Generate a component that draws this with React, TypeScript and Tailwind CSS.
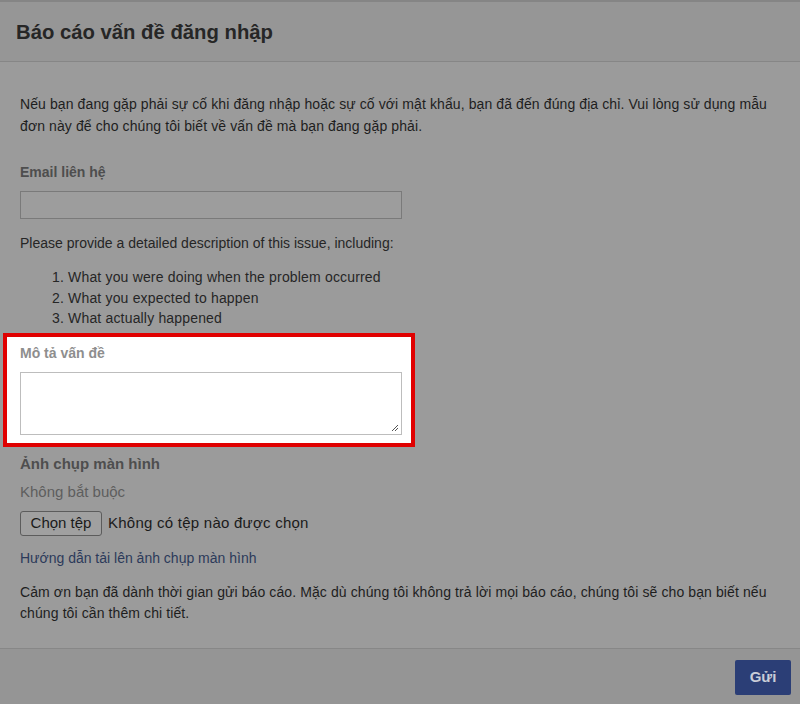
import React from "react";

export default function App() {
  return (
    <div
      className="w-[800px] h-[704px] bg-[#9b9b9b] flex flex-col overflow-hidden text-[#1e1e1e]"
      style={{ fontFamily: '"Liberation Sans", Arial, sans-serif' }}
    >
      <div className="h-[62px] shrink-0 bg-[#969696] border-t-2 border-t-[#858585] border-b border-b-[#868686] flex items-center pl-4">
        <h1 className="text-[20.3px] font-bold text-[#262626] leading-none mt-[2px]">Báo cáo vấn đề đăng nhập</h1>
      </div>

      <div className="h-[586px] shrink-0 px-5 pt-[31px] text-[14px]">
        <p className="leading-[22px] tracking-[0.1px] whitespace-nowrap">
          Nếu bạn đang gặp phải sự cố khi đăng nhập hoặc sự cố với mật khẩu, bạn đã đến đúng địa chỉ. Vui lòng sử dụng mẫu
          <br />
          đơn này để cho chúng tôi biết về vấn đề mà bạn đang gặp phải.
        </p>

        <div className="mt-[25px] leading-[20px] font-bold text-[#4e4e4e]">Email liên hệ</div>
        <div className="mt-[9px] w-[382px] h-[28px] border border-[#7a7a7a] bg-[#9d9d9d]" />

        <p className="mt-[14px] leading-[20px] text-[#262626]">Please provide a detailed description of this issue, including:</p>

        <ol className="mt-[14px] pl-[32px] leading-[20.5px] tracking-[0.17px] text-[#262626]">
          <li>1. What you were doing when the problem occurred</li>
          <li>2. What you expected to happen</li>
          <li>3. What actually happened</li>
        </ol>

        <div className="mt-[4px] -ml-[17px] w-[412px] border-4 border-[#e00000] bg-white pl-[13px] pt-[6px] pb-[8px]">
          <div className="leading-[20px] font-bold text-[#8e8e8e]">Mô tả vấn đề</div>
          <div className="relative mt-[9px] w-[382px] h-[63px] border border-[#bdbdbd] bg-white">
            <svg className="absolute right-[2px] bottom-[2px]" width="9" height="9" viewBox="0 0 9 9">
              <path d="M8 2 L2 8 M8 5 L5 8" stroke="#555" strokeWidth="1" fill="none" />
            </svg>
          </div>
        </div>

        <div className="mt-[7px] leading-[20px] font-bold text-[15px] text-[#4e4e4e]">Ảnh chụp màn hình</div>
        <div className="mt-[8px] leading-[20px] text-[15px] text-[#5e5e5e]">Không bắt buộc</div>

        <div className="mt-[9px] flex items-center h-[25px]">
          <div className="w-[82px] h-[25px] border border-[#5c5c5c] rounded-[3px] bg-[#a0a0a0] flex items-center justify-center text-[15px] text-[#1a1a1a]">
            Chọn tệp
          </div>
          <span className="ml-[6px] text-[15px] tracking-[0.25px] text-[#1a1a1a]">Không có tệp nào được chọn</span>
        </div>

        <div className="mt-[12px] leading-[20px] text-[14px] text-[#2c3a5a]">Hướng dẫn tải lên ảnh chụp màn hình</div>

        <p className="mt-[14px] leading-[21px] text-[14px] tracking-[0.1px] whitespace-nowrap text-[#1e1e1e]">
          Cảm ơn bạn đã dành thời gian gửi báo cáo. Mặc dù chúng tôi không trả lời mọi báo cáo, chúng tôi sẽ cho bạn biết nếu
          <br />
          chúng tôi cần thêm chi tiết.
        </p>
      </div>

      <div className="flex-1 bg-[#959595] border-t border-t-[#878787] flex justify-end items-start pr-[9px] pt-[11px]">
        <div className="w-[56px] h-[35px] rounded-[2px] bg-[#2b3e76] text-[#c9cdd8] font-bold text-[15px] flex items-center justify-center">
          Gửi
        </div>
      </div>
    </div>
  );
}
